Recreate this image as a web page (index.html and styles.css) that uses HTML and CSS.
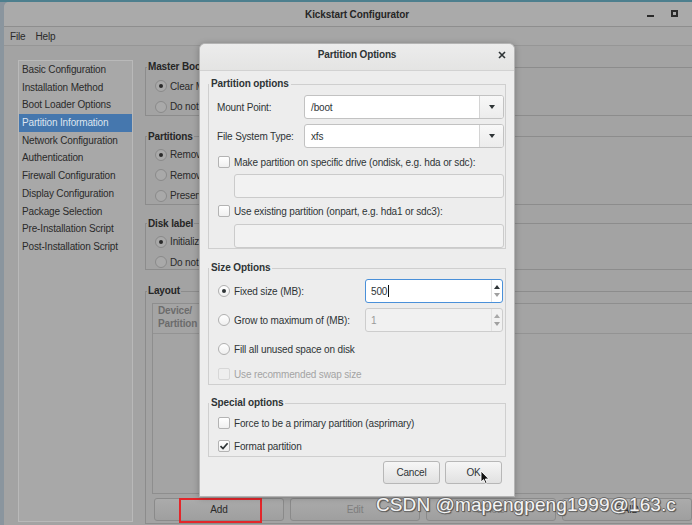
FILE: index.html
```html
<!DOCTYPE html>
<html>
<head>
<meta charset="utf-8">
<title>Kickstart Configurator</title>
<link rel="stylesheet" href="styles.css">
</head>
<body>
<div class="screen">
  <div class="window">
    <div class="titlebar">
      <span></span>
      <span class="title">Kickstart Configurator</span>
      <div class="wm-controls"><span class="wm-min"></span><span class="wm-max"></span></div>
    </div>
    <div class="menubar"><span>File</span><span>Help</span></div>
    <div class="main">
      <ul class="sidebar">
        <li>Basic Configuration</li>
        <li>Installation Method</li>
        <li>Boot Loader Options</li>
        <li class="selected">Partition Information</li>
        <li>Network Configuration</li>
        <li>Authentication</li>
        <li>Firewall Configuration</li>
        <li>Display Configuration</li>
        <li>Package Selection</li>
        <li>Pre-Installation Script</li>
        <li>Post-Installation Script</li>
      </ul>
      <div class="pane">
        <fieldset class="bframe f-mbr">
          <legend>Master Boot Record</legend>
          <div class="bframe-body">
            <div class="brow"><span class="brb on"></span><span>Clear Master Boot Record</span></div>
            <div class="brow"><span class="brb"></span><span>Do not clear Master Boot Record</span></div>
          </div>
        </fieldset>
        <fieldset class="bframe f-part">
          <legend>Partitions</legend>
          <div class="bframe-body">
            <div class="brow"><span class="brb on"></span><span>Remove all existing partitions</span></div>
            <div class="brow"><span class="brb"></span><span>Remove existing Linux partitions</span></div>
            <div class="brow"><span class="brb"></span><span>Preserve existing partitions</span></div>
          </div>
        </fieldset>
        <fieldset class="bframe f-disk">
          <legend>Disk label</legend>
          <div class="bframe-body">
            <div class="brow"><span class="brb on"></span><span>Initialize the disk label</span></div>
            <div class="brow"><span class="brb"></span><span>Do not initialize the disk label</span></div>
          </div>
        </fieldset>
        <fieldset class="bframe f-layout">
          <legend>Layout</legend>
          <div class="layout-body">
            <div class="tree">
              <div class="tree-head"><span class="th">Device/<br>Partition</span></div>
            </div>
            <div class="bbuttons">
              <div class="bbtn add">Add<span class="annot"></span></div>
              <div class="bbtn dis">Edit</div>
              <div class="bbtn dis">Delete</div>
              <div class="bbtn">RAID</div>
            </div>
          </div>
        </fieldset>
      </div>
    </div>
  </div>

  <div class="dialog">
    <div class="dlg-title">
      <span></span>
      <span class="dlg-name">Partition Options</span>
      <span class="dlg-close">
        <svg width="8" height="8" viewBox="0 0 8 8"><path d="M1 1 L7 7 M7 1 L1 7" stroke="#2e3436" stroke-width="1.6" fill="none"/></svg>
      </span>
    </div>
    <div class="dlg-body">
      <fieldset class="frame f1">
        <legend>Partition options</legend>
        <div class="row combo-row">
          <span class="lbl">Mount Point:</span>
          <div class="combo"><span class="combo-text">/boot</span><span class="combo-btn"><span class="tri-down"></span></span></div>
        </div>
        <div class="row combo-row r2">
          <span class="lbl">File System Type:</span>
          <div class="combo"><span class="combo-text">xfs</span><span class="combo-btn"><span class="tri-down"></span></span></div>
        </div>
        <div class="row check-row c1"><span class="cb"></span><span>Make partition on specific drive (ondisk, e.g. hda or sdc):</span></div>
        <div class="entry dis e1"></div>
        <div class="row check-row c2"><span class="cb"></span><span>Use existing partition (onpart, e.g. hda1 or sdc3):</span></div>
        <div class="entry dis e2"></div>
      </fieldset>

      <fieldset class="frame f2">
        <legend>Size Options</legend>
        <div class="row spin-row">
          <span class="opt"><span class="rb on"></span><span>Fixed size (MB):</span></span>
          <div class="spin focus"><span class="spin-text">500<span class="caret"></span></span><span class="spin-arrows"><span class="tri-up"></span><span class="tri-down light"></span></span></div>
        </div>
        <div class="row spin-row s2">
          <span class="opt"><span class="rb"></span><span>Grow to maximum of (MB):</span></span>
          <div class="spin dis"><span class="spin-text">1</span><span class="spin-arrows"><span class="tri-up light"></span><span class="tri-down light"></span></span></div>
        </div>
        <div class="row check-row fill"><span class="rb"></span><span>Fill all unused space on disk</span></div>
        <div class="row check-row swap dim"><span class="cb dis"></span><span>Use recommended swap size</span></div>
      </fieldset>

      <fieldset class="frame f3">
        <legend>Special options</legend>
        <div class="row check-row force"><span class="cb"></span><span>Force to be a primary partition (asprimary)</span></div>
        <div class="row check-row fmt"><span class="cb on"><svg width="10" height="10" viewBox="0 0 10 10"><path d="M1.5 5.2 L4 7.6 L8.6 2.2" stroke="#2e3436" stroke-width="1.7" fill="none"/></svg></span><span>Format partition</span></div>
      </fieldset>

      <div class="dlg-buttons">
        <div class="btn">Cancel</div>
        <div class="btn ok">OK<svg class="cursor" width="10" height="15" viewBox="0 0 10 15"><path d="M1 1 L1 12 L3.6 9.6 L5.4 13.6 L7 12.9 L5.3 9 L8.8 9 Z" fill="#111" stroke="#fff" stroke-width="0.9"/></svg></div>
      </div>
    </div>
  </div>

  <div class="watermark">CSDN @mapengpeng1999@163.c</div>
</div>
</body>
</html>
```

FILE: styles.css
```css
html, body {
  margin: 0;
  padding: 0;
}
body {
  width: 692px;
  height: 525px;
  overflow: hidden;
  font-family: "Liberation Sans", Arial, sans-serif;
  font-size: 10px;
  letter-spacing: -0.15px;
  color: #2e3436;
}
.screen {
  position: relative;
  width: 692px;
  height: 525px;
  overflow: hidden;
  background: linear-gradient(#4d7f8e 0, #4d7f8e 2px, #8a959e 2px);
}

/* ---------- background (dimmed) window ---------- */
.window {
  margin: 2px 0 0 4px;
  width: 706px;
  height: 560px;
  background: #a3a3a3;
  border-radius: 5px 5px 0 0;
  color: #2a2a2a;
}
.titlebar {
  height: 24px;
  border-bottom: 1px solid #8e8e8e;
  background: #aaaaaa;
  border-radius: 5px 5px 0 0;
  display: grid;
  grid-template-columns: 1fr auto 1fr;
  align-items: center;
}
.title {
  font-weight: bold;
  color: #262626;
  letter-spacing: -0.1px;
}
.wm-controls {
  justify-self: end;
  display: flex;
  align-items: center;
  gap: 17px;
  padding-right: 32px;
}
.wm-min {
  width: 7px;
  height: 2px;
  background: #2a2a2a;
  margin-top: 4px;
}
.wm-max {
  width: 7px;
  height: 7px;
  box-sizing: border-box;
  border: 2px solid #2a2a2a;
  margin-top: -1px;
}
.menubar {
  height: 18px;
  border-bottom: 1px solid #969696;
  background: #a6a6a6;
  display: flex;
  align-items: center;
  gap: 10px;
  padding-left: 6px;
}
.main {
  display: flex;
  gap: 12px;
  padding: 14px 0 0 14px;
}
.sidebar {
  list-style: none;
  margin: 0;
  padding: 0;
  width: 115px;
  height: 462px;
  box-sizing: border-box;
  border: 1px solid #b9b9b9;
  background: #a8a8a8;
  flex: none;
}
.sidebar li {
  height: 17.7px;
  line-height: 17.7px;
  padding-left: 3px;
  white-space: nowrap;
}
.sidebar li.selected {
  background: #4577ae;
  color: #dde5ee;
}
.pane {
  flex: 1;
  padding-top: 1px;
}
fieldset {
  margin: 0;
  padding: 0;
  min-width: 0;
}
.bframe {
  border: 1px solid #8c8c8c;
  border-right: none;
}
.bframe legend {
  padding: 0 1px;
  margin-left: 1px;
  line-height: 12px;
  font-weight: bold;
  color: #262626;
}
.bframe-body {
  display: flex;
  flex-direction: column;
  gap: 6.5px;
  padding: 6px 0 1px 9px;
}
.f-part { margin-top: 15px; }
.f-part .bframe-body { padding-top: 5px; }
.f-disk { margin-top: 13px; }
.f-disk .bframe-body { padding-top: 5px; padding-bottom: 0; }
.f-layout { margin-top: 15px; }
.brow {
  height: 14px;
  display: flex;
  align-items: center;
  gap: 3px;
  white-space: nowrap;
}
.brb {
  width: 12px;
  height: 12px;
  box-sizing: border-box;
  border-radius: 50%;
  border: 1px solid #8a8a8a;
  background: #a9a9a9;
  display: flex;
  align-items: center;
  justify-content: center;
  flex: none;
}
.brb.on::after {
  content: "";
  width: 4px;
  height: 4px;
  border-radius: 50%;
  background: #2a2a2a;
}
.layout-body {
  padding: 6px 0 2px 6px;
}
.tree {
  height: 191px;
  box-sizing: border-box;
  border: 1px solid #8e8e8e;
  border-right: none;
  background: #a4a4a4;
}
.tree-head {
  height: 30px;
  box-sizing: border-box;
  border-bottom: 1px solid #939393;
  padding: 0 0 0 5px;
}
.th {
  display: block;
  line-height: 13px;
  color: #6c6c6c;
  font-weight: bold;
}
.bbuttons {
  display: flex;
  gap: 6px;
  margin-top: 4px;
  padding-left: 2px;
}
.bbtn {
  position: relative;
  width: 130px;
  height: 23px;
  box-sizing: border-box;
  border: 1px solid #8a8a8a;
  border-radius: 3px;
  background: linear-gradient(#ababab, #9f9f9f);
  display: flex;
  align-items: center;
  justify-content: center;
  flex: none;
  color: #2a2a2a;
}
.bbtn.dis { color: #7d7d7d; }
.annot {
  position: absolute;
  left: 24px;
  top: -1px;
  width: 83px;
  height: 25px;
  box-sizing: border-box;
  border: 2px solid #e3262a;
}

/* ---------- dialog ---------- */
.dialog {
  position: absolute;
  left: 199px;
  top: 43px;
  width: 316px;
  height: 454px;
  box-sizing: border-box;
  border: 1px solid #b4b4b4;
  border-radius: 6px 6px 0 0;
  background: #ededed;
  box-shadow: 0 1px 6px rgba(0,0,0,0.25);
  color: #2e3436;
}
.dlg-title {
  height: 27px;
  box-sizing: border-box;
  border-bottom: 1px solid #d2d2d2;
  border-radius: 6px 6px 0 0;
  background: linear-gradient(#ececec, #e4e4e3);
  display: grid;
  grid-template-columns: 1fr auto 1fr;
  align-items: center;
  padding-bottom: 5px;
}
.dlg-name {
  font-weight: bold;
  letter-spacing: -0.15px;
}
.dlg-close {
  justify-self: end;
  padding-right: 8px;
  display: flex;
}
.dlg-body {
  padding: 0 8px;
}
.frame {
  border: 1px solid #cfcfcf;
  padding: 6px 1px 0 8px;
}
.frame legend {
  padding: 0 2px;
  margin-left: -8px;
  line-height: 12px;
  font-weight: bold;
  color: #2e3436;
  letter-spacing: -0.1px;
}
.f1 { margin-top: 7px; }
.f1 .combo-row:first-of-type { margin-top: -1px; }
.f2 { margin-top: 13px; padding-top: 5px; padding-bottom: 3px; }
.f3 { margin-top: 12px; padding-top: 7px; padding-bottom: 3px; }
.row {
  display: flex;
  align-items: center;
  white-space: nowrap;
}
.combo-row { height: 24px; }
.combo-row.r2 { margin-top: 5px; }
.lbl {
  width: 87px;
  flex: none;
}
.combo {
  width: 200px;
  height: 24px;
  box-sizing: border-box;
  border: 1px solid #c2c2c2;
  border-radius: 3px;
  background: #fff;
  display: flex;
}
.combo-text {
  flex: 1;
  padding-left: 6px;
  display: flex;
  align-items: center;
}
.combo-btn {
  width: 23px;
  border-left: 1px solid #d4d4d4;
  background: linear-gradient(#f8f8f8, #ececec);
  border-radius: 0 2px 2px 0;
  display: flex;
  align-items: center;
  justify-content: center;
}
.tri-down {
  width: 0;
  height: 0;
  border-left: 3.5px solid transparent;
  border-right: 3.5px solid transparent;
  border-top: 4px solid #2e3436;
}
.tri-up {
  width: 0;
  height: 0;
  border-left: 3.5px solid transparent;
  border-right: 3.5px solid transparent;
  border-bottom: 4px solid #2e3436;
}
.tri-down.light { border-top-color: #a0a0a0; }
.tri-up.light { border-bottom-color: #a8a8a8; }
.check-row {
  height: 14px;
  gap: 4px;
  padding-left: 1px;
}
.check-row.c1 { margin-top: 7px; }
.check-row.c2 { margin-top: 6px; }
.entry {
  height: 24px;
  box-sizing: border-box;
  margin: 6px 0 0 17px;
  border: 1px solid #cbcbcb;
  border-radius: 3px;
  background: #f2f2f2;
}
.e1 { margin-top: 5px; }
.cb {
  width: 12px;
  height: 12px;
  box-sizing: border-box;
  border: 1px solid #b3b3b3;
  border-radius: 2px;
  background: linear-gradient(#ffffff, #efefef);
  flex: none;
  display: flex;
  align-items: center;
  justify-content: center;
}
.cb svg { display: block; }
.cb.dis {
  border-color: #d7d7d7;
  background: #eeeeee;
}
.rb {
  width: 12px;
  height: 12px;
  box-sizing: border-box;
  border: 1px solid #b0b0b0;
  border-radius: 50%;
  background: linear-gradient(#ffffff, #efefef);
  flex: none;
  display: flex;
  align-items: center;
  justify-content: center;
}
.rb.on::after {
  content: "";
  width: 4px;
  height: 4px;
  border-radius: 50%;
  background: #2e3436;
}
.spin-row { height: 24px; }
.spin-row.s2 { margin-top: 5px; }
.opt {
  width: 148px;
  flex: none;
  display: flex;
  align-items: center;
  gap: 4px;
  padding-left: 1px;
  box-sizing: border-box;
}
.spin {
  width: 138px;
  height: 24px;
  box-sizing: border-box;
  border: 1px solid #c2c2c2;
  border-radius: 3px;
  background: #fff;
  display: flex;
}
.spin.focus { border-color: #4a90d9; }
.spin.dis { background: #f1f1f1; border-color: #cdcdcd; color: #9a9a9a; }
.spin-text {
  flex: 1;
  padding-left: 5px;
  display: flex;
  align-items: center;
}
.caret {
  display: inline-block;
  width: 1px;
  height: 12px;
  background: #111;
  margin-left: 1px;
}
.spin-arrows {
  width: 10px;
  border-left: 1px solid #e2e2e2;
  display: flex;
  flex-direction: column;
  align-items: center;
  justify-content: space-around;
  padding: 3px 0;
}
.fill { margin-top: 10px; }
.swap { margin-top: 11px; }
.dim { color: #a4a4a4; }
.fmt { margin-top: 9px; }
.dlg-buttons {
  display: flex;
  justify-content: flex-end;
  gap: 5px;
  margin: 4px 4px 0 0;
}
.btn {
  position: relative;
  width: 57px;
  height: 23px;
  box-sizing: border-box;
  border: 1px solid #b7b7b7;
  border-radius: 3px;
  background: linear-gradient(#f6f6f6, #e1e1e1);
  display: flex;
  align-items: center;
  justify-content: center;
}
.cursor {
  position: absolute;
  left: 34px;
  top: 8px;
}

/* ---------- watermark ---------- */
.watermark {
  position: absolute;
  left: 376px;
  top: 494px;
  font-family: "Liberation Sans", Arial, sans-serif;
  font-size: 19px;
  letter-spacing: 0.1px;
  color: #f4f4f4;
  white-space: nowrap;
  text-shadow: -1px 0 #6a6a6a, 1px 0 #6a6a6a, 0 -1px #6a6a6a, 0 1px #6a6a6a, 1px 1px 1px #3c3c3c;
}
```
